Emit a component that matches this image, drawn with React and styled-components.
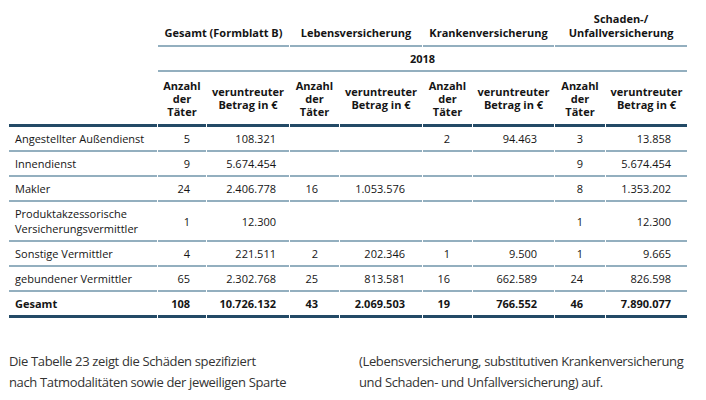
import React from "react";
import styled, { createGlobalStyle } from "styled-components";

const GlobalStyle = createGlobalStyle`
  html, body { margin: 0; padding: 0; background: #ffffff; }
  body { font-family: "Open Sans", "Noto Sans", sans-serif; color: #151515; }
`;

const Page = styled.div`
  width: 706px;
  height: 400px;
  padding: 9px 0 0 9px;
  box-sizing: border-box;
  overflow: hidden;
`;

const Table = styled.table`
  table-layout: fixed;
  width: 680px;
  border-collapse: separate;
  border-spacing: 1px 0;
  margin-left: -1px;
  font-size: 11px;
  line-height: 15px;
`;

const THIN = "2px solid #93afbf";
const THICK = "3px solid #234a66";

const HeadCell = styled.th`
  font-weight: 700;
  text-align: center;
  vertical-align: ${p => p.$valign || "middle"};
  padding: ${p => p.$pad || "0 2px"};
  height: ${p => p.$h}px;
  line-height: ${p => p.$lh || 14}px;
  border-bottom: ${p => (p.$line === "thick" ? THICK : p.$line === "thin" ? THIN : "none")};
  box-sizing: border-box;
`;

const Label = styled.td`
  text-align: left;
  padding: 4px 4px 4px 6px;
  font-weight: ${p => (p.$bold ? 700 : 400)};
  border-bottom: ${p => (p.$last ? THICK : THIN)};
  vertical-align: middle;
  white-space: nowrap;
`;

const Num = styled.td`
  text-align: right;
  padding: 4px ${p => p.$pr}px 4px 0;
  font-weight: ${p => (p.$bold ? 700 : 400)};
  border-bottom: ${p => (p.$last ? THICK : THIN)};
  vertical-align: middle;
  white-space: nowrap;
`;

const Text = styled.div`
  display: grid;
  grid-template-columns: 350px 345px;
  margin-top: 33px;
  font-family: "Open Sans", sans-serif;
  font-size: 13px;
  letter-spacing: -0.35px;
  line-height: 21px;
  color: #333333;
`;

const Para = styled.p`
  margin: 0;
  white-space: nowrap;
`;

const widths = [148, 48, 82, 49, 82, 49, 81, 50, 81];
const pads = [16, 13, 21, 17, 22, 17, 22, 16];

const rows = [
  ["Angestellter Außendienst", "5", "108.321", "", "", "2", "94.463", "3", "13.858"],
  ["Innendienst", "9", "5.674.454", "", "", "", "", "9", "5.674.454"],
  ["Makler", "24", "2.406.778", "16", "1.053.576", "", "", "8", "1.353.202"],
  [["Produktakzessorische", "Versicherungsvermittler"], "1", "12.300", "", "", "", "", "1", "12.300"],
  ["Sonstige Vermittler", "4", "221.511", "2", "202.346", "1", "9.500", "1", "9.665"],
  ["gebundener Vermittler", "65", "2.302.768", "25", "813.581", "16", "662.589", "24", "826.598"],
  ["Gesamt", "108", "10.726.132", "43", "2.069.503", "19", "766.552", "46", "7.890.077"],
];

const groups = [
  ["Gesamt (Formblatt B)"],
  ["Lebensversicherung"],
  ["Krankenversicherung"],
  ["Schaden-/", "Unfallversicherung"],
];

export default function App() {
  return (
    <Page>
      <GlobalStyle />
      <Table>
        <colgroup>
          {widths.map((w, i) => (
            <col key={i} style={{ width: w }} />
          ))}
        </colgroup>
        <thead>
          <tr>
            <HeadCell $h={38} />
            {groups.map((g, i) => (
              <HeadCell key={i} colSpan={2} $h={38} $valign="bottom" $pad="0 2px 5px" $line="thin">
                {g.map((l, j) => (
                  <div key={j}>{l}</div>
                ))}
              </HeadCell>
            ))}
          </tr>
          <tr>
            <HeadCell $h={25} />
            <HeadCell colSpan={8} $h={25} $line="thin">2018</HeadCell>
          </tr>
          <tr>
            <HeadCell $h={55} $line="thick" />
            {[0, 1, 2, 3].map(i => (
              <React.Fragment key={i}>
                <HeadCell $h={55} $lh={13} $line="thick">
                  Anzahl<br />der<br />Täter
                </HeadCell>
                <HeadCell $h={55} $lh={13} $line="thick">
                  veruntreuter<br />Betrag in €
                </HeadCell>
              </React.Fragment>
            ))}
          </tr>
        </thead>
        <tbody>
          {rows.map((r, ri) => {
            const last = ri === rows.length - 1;
            return (
              <tr key={ri}>
                <Label $bold={last} $last={last}>
                  {Array.isArray(r[0]) ? r[0].map((l, k) => <div key={k}>{l}</div>) : r[0]}
                </Label>
                {r.slice(1).map((v, ci) => (
                  <Num key={ci} $pr={pads[ci]} $bold={last} $last={last}>
                    {v}
                  </Num>
                ))}
              </tr>
            );
          })}
        </tbody>
      </Table>
      <Text>
        <Para>
          Die Tabelle 23 zeigt die Schäden spezifiziert
          <br />
          nach Tatmodalitäten sowie der jeweiligen Sparte
        </Para>
        <Para>
          (Lebensversicherung, substitutiven Krankenversicherung
          <br />
          und Schaden- und Unfallversicherung) auf.
        </Para>
      </Text>
    </Page>
  );
}
